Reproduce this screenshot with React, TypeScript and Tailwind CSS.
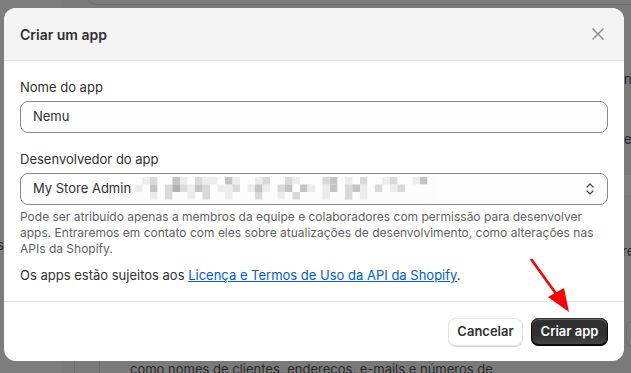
import React from 'react';

const font = { fontFamily: 'Inter, "Noto Sans", sans-serif' };

// blurred-out store id after "My Store Admin"
const mosaic = [
  '0120031021103100120021000230102001200130',
  '1030242132011201310230310130231020120000',
  '0010200102001000200102000100201000000000',
];
const shades = ['#fcfcfc', '#ececec', '#d9d9d9', '#c4c4c4', '#b0b0b0'];

function Mosaic() {
  return (
    <svg width="300" height="24" className="shrink-0">
      {mosaic.map((row, r) =>
        row.split('').map((c, i) => (
          <rect key={r + '-' + i} x={i * 7.5} y={r * 7.5} width="7.6" height="7.6" fill={shades[Number(c)]} />
        ))
      )}
    </svg>
  );
}

function Backdrop() {
  return (
    <div className="absolute inset-0 text-[13px] text-[#2b2b2b]">
      <div className="absolute left-0 top-0 w-[62px] h-full bg-[#7d7d7d]" />
      <div className="absolute left-[85px] top-[-12px] w-[560px] h-[17px] rounded-b-xl border border-[#6c6c6c]" />
      <div className="absolute left-[74px] top-[361px] w-px h-[12px] bg-[#6c6c6c]" />
      <div className="absolute left-[99px] top-[361px] w-px h-[12px] bg-[#6c6c6c]" />
      <div className="absolute left-[130px] top-[360px] whitespace-nowrap">como nomes de clientes, endereços, e-mails e números de</div>
      <div className="absolute left-[624px] top-[70px]">n</div>
      <div className="absolute left-[624px] top-[130px]">e</div>
      <div className="absolute left-[624px] top-[175px] w-[10px] h-[20px] bg-[#808080]" />
      <div className="absolute left-[622px] top-[242px]">re</div>
      <div className="absolute left-[-3px] top-[236px]">s</div>
      <div className="absolute left-[626px] top-[320px] w-[20px] h-[28px] rounded-lg border border-[#6c6c6c]" />
    </div>
  );
}

export default function App() {
  return (
    <div className="relative w-[631px] h-[373px] overflow-hidden bg-[#7a7a7a]" style={font}>
      <Backdrop />
      <div className="relative ml-[4px] mt-[8px] w-[620px] h-[353px] rounded-xl bg-white overflow-hidden flex flex-col text-[#303030]">
        <div className="h-[53px] bg-[#f3f3f3] border-b border-[#e3e3e3] pl-4 pr-5 flex items-center justify-between">
          <h2 className="text-[14px] font-semibold">Criar um app</h2>
          <svg width="12" height="12" viewBox="0 0 12 12" className="text-[#8a8a8a]">
            <path d="M1 1L11 11M11 1L1 11" stroke="currentColor" strokeWidth="1.4" strokeLinecap="round" />
          </svg>
        </div>

        <div className="px-4 pt-4 pb-4 border-b border-[#e3e3e3] text-[13px]">
          <label className="block leading-5">Nome do app</label>
          <div className="mt-1 h-[32px] rounded-lg border border-[#8a8a8a] bg-[#fdfdfd] px-3 flex items-center">
            Nemu
          </div>

          <label className="block leading-5 mt-4">Desenvolvedor do app</label>
          <div className="mt-1 h-[32px] rounded-lg border border-[#8a8a8a] bg-[#fdfdfd] pl-3 pr-3 flex items-center">
            <span className="mr-[4px]">My Store Admin</span>
            <Mosaic />
            <div className="flex-1" />
            <svg width="10" height="14" viewBox="0 0 10 14" className="text-[#4a4a4a]">
              <path d="M2 5L5 2L8 5M2 9L5 12L8 9" fill="none" stroke="currentColor" strokeWidth="1.3" strokeLinecap="round" strokeLinejoin="round" />
            </svg>
          </div>
          <p className="mt-1 leading-4 text-xs text-[#616161]">
            Pode ser atribuído apenas a membros da equipe e colaboradores com permissão para desenvolver apps. Entraremos em contato com eles sobre atualizações de desenvolvimento, como alterações nas APIs da Shopify.
          </p>
          <p className="mt-2 leading-5">
            Os apps estão sujeitos aos{' '}
            <a className="text-[#005bd3] underline">Licença e Termos de Uso da API da Shopify</a>.
          </p>
        </div>

        <div className="flex-1 px-4 flex items-center justify-end gap-2 text-[13px] font-semibold">
          <button className="h-[28px] w-[75px] rounded-lg bg-white text-[#303030] shadow-[inset_0_0_0_1px_#e3e3e3,0_1px_0_0_#d4d4d4]">
            Cancelar
          </button>
          <button className="h-[28px] w-[77px] rounded-lg text-white bg-[linear-gradient(180deg,#303030_60%,#4a4a4a_100%)] shadow-[inset_0_-1px_0_1px_rgba(0,0,0,0.8),inset_0_0_0_1px_#303030,inset_0_1px_0_1px_rgba(255,255,255,0.25)]">
            Criar app
          </button>
        </div>
      </div>

      <svg className="absolute left-0 top-0 pointer-events-none" width="631" height="373">
        <line x1="531" y1="259" x2="562" y2="302" stroke="#ff0000" strokeWidth="2.6" />
        <polygon points="569,312 548,297 564,288" fill="#ff0000" />
      </svg>
    </div>
  );
}
